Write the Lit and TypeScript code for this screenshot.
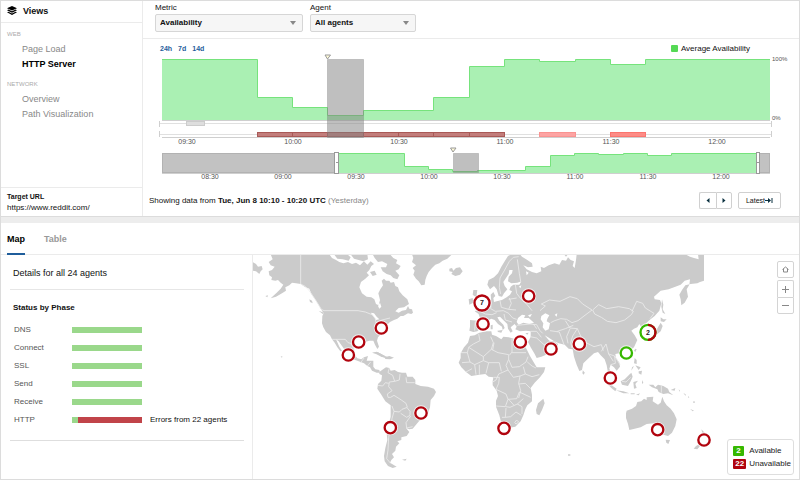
import { LitElement, html, svg, css } from "lit";
import { customElement, state } from "lit/decorators.js";
import { classMap } from "lit/directives/class-map.js";
import { styleMap } from "lit/directives/style-map.js";

/* Availability steps: [end, percent], minutes counted from 09:30. */
const STEPS: [number, number][] = [
  [20, 100], [30, 37], [40, 21], [50, 8], [70, 16], [80, 37], [90, 88],
  [100, 100], [110, 96], [120, 100], [130, 92], [165, 100],
];
const CHART_W = 613;
const LEFT = 3;
const RIGHT = 611;
const mainX = (t: number) => Math.min(RIGHT, Math.round(28 + 3.533 * t));
const miniX = (t: number) => Math.min(RIGHT, Math.round(197 + 2.433 * t));

function stepPath(x: (t: number) => number, start: number, base: number, height: number) {
  let px = start;
  let d = "";
  for (const [end, pct] of STEPS) {
    const y = base - Math.round((pct * height) / 100) + 0.5;
    d += `${d ? "L" : "M"}${px} ${y}`;
    px = x(end) - (end === 165 ? 0 : 0.5);
    d += `L${px} ${y}`;
  }
  return { line: d, area: `${d}L${px} ${base}L${start} ${base}Z` };
}

const clock = (t: number) => {
  const m = 570 + t;
  return `${String(Math.floor(m / 60)).padStart(2, "0")}:${String(m % 60).padStart(2, "0")}`;
};

@customElement("availability-timeline")
export class AvailabilityTimeline extends LitElement {
  static styles = css`
    :host { display: block; }
    .chart { display: grid; grid-template-columns: 1fr 27px; }
    .scale { display: flex; flex-direction: column; justify-content: space-between; padding: 1px 0 15px; font-size: 6px; line-height: 9px; color: #555; }
    svg { display: block; width: 100%; overflow: visible; }
    .main { height: 84px; }
    .mini { height: 27px; }
    .times { position: relative; height: 8px; font-size: 7px; line-height: 8px; color: #555; grid-column: 1; }
    .times span { position: absolute; transform: translateX(-50%); }
    .area { fill: #aaf0b3; }
    .line { fill: none; stroke: #76e37c; vector-effect: non-scaling-stroke; }
    .axis { fill: #cfcfcf; }
    .track { fill: #e0e0e0; }
    .quiet { fill: #dedede; stroke: #cccccc; }
    .outage { fill: #c27d7b; stroke: #a95957; }
    .warn { fill: #fda4a3; stroke: #f99391; }
    .alert { fill: #fd8c86; stroke: #fa756f; }
    .shade { fill: #808080; fill-opacity: 0.5; stroke: #808080; stroke-opacity: 0.35; }
    .outside { fill: #c2c2c2; stroke: #b2b2b2; }
    .handle { fill: #fff; stroke: #999; }
    .pin { fill: #fffbd8; stroke: #999; }
  `;

  private labels(x: (t: number) => number, from: number) {
    const out = [];
    for (let t = from; t <= 150; t += 30) {
      out.push(html`<span style=${styleMap({ left: `${(x(t) / CHART_W) * 100}%` })}>${clock(t)}</span>`);
    }
    return html`<div class="times">${out}</div>`;
  }

  render() {
    const main = stepPath(mainX, LEFT, 66, 61);
    const mini = stepPath(miniX, 178, 27, 20);
    const outages = [[20, 30], [30, 40], [40, 50], [50, 60], [60, 70], [70, 80], [80, 90]];
    const box = (cls: string, a: number, b: number, y: number, h: number) =>
      svg`<rect class=${cls} x=${a + 0.5} y=${y + 0.5} width=${b - a} height=${h - 1} />`;
    return html`
      <div class="chart">
        <svg class="main" viewBox="0 0 613 84" preserveAspectRatio="none" role="img" aria-label="Average availability">
          <path class="area" d=${main.area} /><path class="line" d=${main.line} />
          <rect class="axis" x="3" y="66" width="608" height="1" />
          <rect class="track" x="0" y="69" width="613" height="1" />
          <rect class="axis" x="0" y="67" width="1" height="6" /><rect class="axis" x="612" y="67" width="1" height="6" />
          <rect class="track" x="0" y="80" width="613" height="1" />
          <rect class="axis" x="0" y="77" width="1" height="6" /><rect class="axis" x="612" y="77" width="1" height="6" />
          ${box("quiet", 27, 45, 67, 5)}
          ${outages.map(([a, b]) => box("outage", mainX(a) - 1, mainX(b) - 1, 78, 5))}
          ${box("warn", mainX(100) - 1, mainX(110) - 1, 78, 5)}
          ${box("alert", mainX(120) - 1, mainX(130) - 1, 78, 5)}
          <rect class="axis" x="3" y="83" width="608" height="1" />
          ${box("shade", mainX(40) - 1, mainX(50) - 1, 5, 79)}
          <path class="pin" d="M166 1H171.500L168.500 5Z" />
        </svg>
        <div class="scale"><span>100%</span><span>0%</span></div>
        ${this.labels(mainX, 0)}
      </div>
      <div class="chart">
        <svg class="mini" viewBox="0 0 613 27" preserveAspectRatio="none" role="img" aria-label="Visible time range">
          <path class="area" d=${mini.area} /><path class="line" d=${mini.line} />
          <rect class="axis" x="3" y="27" width="608" height="1" />
          ${box("outside", 3, 177, 7, 20)}
          ${box("outside", 600, 610, 7, 20)}
          ${box("shade", miniX(40), miniX(50), 7, 20)}
          <rect class="handle" x="175.500" y="6.500" width="4" height="21" />
          <rect class="handle" x="597.500" y="6.500" width="3" height="21" />
          <path class="handle" d="M177 16.500H179M598 16.500H600" />
          <path class="pin" d="M291.500 2H297L294 6Z" />
        </svg>
        ${this.labels(miniX, -60)}
      </div>
    `;
  }
}

type Marker = { x: number; y: number; kind: "down" | "up" | "mixed"; count?: number };

const MARKERS: Marker[] = [
  { x: 1144, y: 984, kind: "down" }, { x: 1076, y: 1026, kind: "down" }, { x: 1045, y: 1065, kind: "down" },
  { x: 1263, y: 1239, kind: "down" }, { x: 1171, y: 1283, kind: "down" },
  { x: 1586, y: 888, kind: "down" }, { x: 1446, y: 909, kind: "down", count: 7 }, { x: 1449, y: 972, kind: "down" },
  { x: 1561, y: 1026, kind: "down" }, { x: 1653, y: 1047, kind: "down" }, { x: 1738, y: 1032, kind: "down" },
  { x: 1944, y: 997, kind: "mixed", count: 2 }, { x: 1879, y: 1059, kind: "up" }, { x: 1831, y: 1134, kind: "down" },
  { x: 1512, y: 1285, kind: "down" }, { x: 1973, y: 1289, kind: "down" }, { x: 2112, y: 1320, kind: "down" },
];

@customElement("agent-map")
export class AgentMap extends LitElement {
  static styles = css`
    :host { display: block; position: relative; }
    .world { display: block; width: 100%; }
    .land { fill: #cbcbcb; }
    .sea { fill: #fff; }
    .borders { fill: none; stroke: #ececec; stroke-width: 2.5; stroke-linejoin: round; }
    .halo { fill: #fff; fill-opacity: 0.7; }
    .ring { fill: #fff; stroke-width: 7; }
    .down { stroke: #b1040e; }
    .up, .mixed { stroke: #36b800; }
    .half { fill: none; stroke: #b1040e; stroke-width: 7; }
    .count { font: bold 21px "Liberation Sans", Arial, sans-serif; text-anchor: middle; fill: #222; }
    .controls { position: absolute; top: 6px; right: 5px; display: flex; flex-direction: column; }
    .controls button { width: 17px; height: 17px; padding: 0; display: grid; place-items: center; background: #fff; border: 1px solid #d4d4d4; border-radius: 2px; }
    .controls .home { margin-bottom: 2px; }
    .controls .in { border-bottom: 0; border-radius: 2px 2px 0 0; }
    .controls .out { border-radius: 0 0 2px 2px; }
    .controls svg { width: 9px; height: 9px; fill: none; stroke: #888; }
    .legend { position: absolute; right: 5px; bottom: 4px; margin: 0; padding: 4px 2px 4px 5px; list-style: none; background: #fff; border: 1px solid #dedede; border-radius: 3px; font-size: 8px; color: #222; }
    .legend li { display: grid; grid-template-columns: 14px auto; gap: 2px; align-items: center; height: 13px; }
    .legend b { justify-self: start; padding: 0 3px; line-height: 10px; border-radius: 1px; color: #fff; background: #36b800; }
    .legend .bad { padding: 0 2px; background: #b1040e; }
  `;

  private marker(m: Marker) {
    const r = m.count ? 22.5 : 17;
    return svg`<circle class="halo" cx=${m.x} cy=${m.y} r=${r + 6} />
      <circle class="ring ${m.kind}" cx=${m.x} cy=${m.y} r=${r} />
      ${m.kind === "mixed" ? svg`<path class="half" d="M${m.x} ${m.y - r}A${r} ${r} 0 0 1 ${m.x} ${m.y + r}" />` : ""}
      ${m.count ? svg`<text class="count" x=${m.x} y=${m.y + 7}>${m.count}</text>` : ""}`;
  }

  render() {
    return html`
      <svg class="world" viewBox="759 765 1638 672" role="img" aria-label="World map of agents">
        <g transform="translate(750 750)">
          <path class="land" d="M8 36L18 42L24 50L35 48L38 58L32 64L28 72L18 64L8 62ZM62 13L68 28L56 36L62 46L74 50L66 60L56 64L58 76L66 82L64 90L76 92L84 90L92 98L100 104L92 116L80 128L62 145L78 140L96 130L108 122L106 112L118 106L126 98L138 100L152 102L164 110L178 116L184 132L194 146L204 162L212 176L221 190L217 198L216 220L220 232L228 246L240 256L246 268L254 278L262 292L271 304L276 302L268 290L258 268L266 274L276 288L290 308L302 326L318 331L332 336L342 340L352 348L360 352L366 362L380 368L390 368L388 360L376 358L370 350L370 332L350 332L354 318L342 322L334 328L322 325L314 314L312 296L318 284L330 276L345 276L358 272L370 272L375 284L382 297L387 290L381 272L384 262L394 251L405 246L412 236L410 226L420 216L432 210L442 206L452 198L460 198L474 190L484 192L489 188L486 178L478 176L474 168L468 180L456 182L446 188L436 184L446 174L462 172L477 162L472 148L458 136L448 124L444 112L436 108L432 96L422 98L418 92L408 92L402 86L395 92L399 106L391 118L385 130L390 150L386 166L378 162L373 148L364 142L350 140L336 130L328 112L333 96L346 86L357 76L350 68L358 60L364 48L372 42L362 34L352 44L342 34L330 46L318 38L306 42L294 36L280 40L268 36L258 30L246 24L238 13ZM486 13H606L592 26L578 32L568 40L556 44L546 54L536 66L530 78L526 90L524 104L514 106L506 94L498 86L490 74L494 62L488 54L498 46L486 36L490 24ZM368 13H420L430 24L442 30L438 40L452 48L446 58L436 62L448 76L442 88L430 84L422 76L410 72L398 64L392 52L408 52L412 42L396 34L384 36L374 24ZM252 13H292L302 22L296 32L278 28L262 26ZM302 13H352L354 28L340 34L326 30L312 26ZM360 66L374 62L380 74L368 78ZM366 308L380 305L394 312L406 319L394 320L378 312ZM404 322L418 318L432 323L420 328L406 327ZM178 148L186 152L188 160L180 156ZM46 138L54 136L52 142ZM206 182L222 188L218 192ZM92 318L98 320L95 323Z" />
          <path class="sea" d="M384 168L390 158L394 170L388 176ZM362 188L372 190L380 200L388 208L378 210L370 198Z" />
          <path class="borders" d="M152 13V102L164 108L178 122L198 152L214 178L222 182H324L346 186L366 194L376 206L378 218L396 210L420 204M246 268H270L286 268L294 278L302 280L312 298M332 338L342 324M352 348L362 336" />
        </g>
        <g transform="translate(900 1050)">
          <path class="land" d="M238 66L246 60L258 52L268 54L272 62L284 60L294 66L306 68L318 68L322 80L338 80L346 90V102L362 108L384 110L402 116L408 126L402 138L392 150L390 172L384 190L372 206L358 212L348 224L338 236L328 238L318 234L328 246L320 258L304 262L304 270L292 274L298 280L288 290L286 302L276 312L282 322L274 330L270 338L290 350L278 354L264 348L254 334L252 318L256 294L262 270L260 250L264 232L272 200L272 166L256 154L244 134L232 116L234 102L244 92L246 76L238 72ZM306 329L320 326L316 332ZM218 8L234 7L250 16L262 21L278 24L262 26L244 20L232 10Z" />
          <path class="borders" d="M268 54L264 68L278 76L284 94L268 96L266 110L276 122L262 132L264 142L272 142L282 136L304 150L318 160L322 172L306 178L298 186L282 184L276 168M284 94L298 90L300 72M318 82L320 98L344 98M234 106L248 108L256 98M256 98L266 100M322 174L330 184V196L320 202L302 190M332 198L318 218L320 234L338 230M282 184L276 206L272 232L266 262L264 300L260 326L272 340" />
        </g>
        <g transform="translate(1320 750)">
          <path class="land" d="M214 13L204 18L194 34L184 50L174 70L162 82L146 90L142 104L150 118L162 108L170 118L176 138L186 140L192 130L202 118L194 108L190 96L198 84L206 72L208 60L218 60L216 70L206 80L204 94L214 100L232 98L244 94L238 104L220 104L212 110L208 120L216 124L210 134L200 142L186 150L170 154L162 156L160 144L166 138L160 126L152 134L154 154L142 158L130 172L118 178L104 184L116 192L120 204L112 212L90 210L90 230L88 242L100 246L112 244L122 234L134 222L142 212L154 206L164 210L174 222L186 230L188 240L194 234L190 224L178 212L172 202L180 200L192 212L202 222L204 236L212 248L218 244L212 232L224 222L230 230L226 238L240 244L258 242L272 244L272 260L264 276L272 292L284 312L290 324L304 320L324 312L342 304L352 292L354 282L342 274L328 272L314 256L324 262L340 272L356 280L374 284L386 296L398 298L402 320L410 344L418 363L426 360L430 340L444 326L462 310L474 306L482 316L494 328L500 346L504 368L516 382L524 390L516 372L508 356L512 344L522 352L530 362L540 350L538 338L528 324L526 312L546 308L564 306L582 292L592 270L584 256L574 242L582 236L592 232L598 222L604 232L610 246L620 242L612 226L626 212L644 198L658 182L664 160L660 150L644 148L642 140L662 122L686 118L706 110L722 104L734 92L750 88L748 104L740 118L744 140L734 158L724 166L722 148L718 134L726 120L736 106L752 102L772 100L780 96L792 92V13H774L776 28L762 24L750 20L736 13H410L408 30L404 54L398 48L402 34L392 30L384 22L378 32L366 30L358 44L344 40L326 46L312 54L302 50L304 64L290 70L276 66L260 58L250 46L264 52L278 50L276 40L262 30L246 20L240 13ZM100 120L112 120L110 134L118 144L126 160L126 174L106 178L112 162L104 152L106 140L98 134ZM86 148L98 144L100 158L88 164ZM28 56L36 54L40 62L48 54L60 52L68 64L60 74L46 78L34 72L38 66L28 64ZM372 13L384 13L378 20ZM152 226L158 224V238H152ZM172 242L188 240L184 248L174 246ZM256 250L266 248L262 254ZM428 364L434 368L431 374L427 370Z" />
          <path class="sea" d="M230 216L234 204L246 194L256 196L252 204L266 204L282 218L268 222L250 218L236 224ZM264 196L276 192L270 202ZM304 198L316 190L328 196L322 206L320 214L330 220L326 238L316 242L308 232L310 220L302 208ZM344 194L352 190L350 200ZM258 64L266 68L260 76ZM236 110L244 106L242 114Z" />
          <path class="borders" d="M182 132L178 112L180 84L194 60L208 34L220 22L236 20M232 28L238 70L242 94M226 104L230 130L242 146L258 160L276 182M154 154L152 176L166 184L190 182L206 190L218 204L230 208M180 152L184 172L206 178L214 160L208 144M206 148L230 144M206 178L228 180M120 184L136 192L156 194L170 188M106 214L104 242M116 212L132 220M192 192L196 210L216 216M230 226L270 222L290 224L300 242L308 250M272 244L290 244L304 262M270 260L290 264L312 284L336 290M300 182L316 168L304 162L328 150L360 154L390 140L412 146L428 162L456 180L432 198L414 212L396 218L380 208L362 206L344 212L332 218M458 180L476 164L500 176L536 170L568 176L580 184L574 194L554 210L528 218L502 214L484 202L464 192ZM576 184L590 154L608 160L616 174L642 190L630 206M330 242L358 246L364 262L372 284M352 244L376 236L400 226M376 212L390 234L412 236L422 258L438 278L462 290L484 284L490 302M390 236L380 260L384 280M412 236L398 258L392 278L396 294M280 222L290 236M484 304L498 282L506 312L520 334M506 312L524 318L526 340L512 344M524 318L540 344" />
        </g>
        <g transform="translate(1320 990)">
          <path class="land" d="M90 18L104 16L118 8L140 4L154 4L156 14L168 18L184 28L190 20L206 22L222 26L240 30L256 30L252 42L260 58L270 78L282 98L290 112L316 112L312 126L300 142L284 158L272 174L276 194L276 214L262 226L256 238L250 256L242 274L226 290L206 294L190 296L184 280L178 256L168 230L168 212L174 198L170 182L158 166L158 154L160 142L146 140L136 132L118 134L94 138L78 126L64 112L56 98L62 84L62 70L72 52L84 38ZM310 206L314 220L306 240L298 256L290 252L288 240L294 220ZM384 373H391V377H384Z" />
          <path class="borders" d="M116 12L120 32L100 42L86 52L130 80L154 58L160 38L152 20M62 68H82L86 52M82 68L90 96L66 98M90 96L104 104L130 92L130 80M154 58L174 68L206 74V88L198 106L204 120L176 132L168 150L158 156M162 38L158 60M216 26V66L208 76M216 68H258M130 92L146 98L178 98L184 124M146 98L138 130M104 104L108 134M118 104V134M78 126L96 116M206 88L216 112L238 110L258 96L264 80M262 96L276 108L288 114M250 110L256 132L276 140L298 134M256 132L240 138L220 142L204 120M240 138L236 160L242 182L236 204M236 162L256 160L272 176M160 142H178L176 160L168 178L198 192L204 208L230 206L238 186L272 202M168 228L196 230L204 208M198 230L210 232L232 222L250 206M232 222L246 230V252M198 234L196 262H186M196 262L212 260L228 246L244 256M206 208L222 226M224 278L230 270L236 276L228 282Z" />
        </g>
        <g transform="translate(1680 750)">
          <path class="land" d="M306 148L310 164L308 178L316 192L308 188L304 170ZM302 202L310 208L320 208L312 216L302 214ZM302 218L308 228L302 244L292 252L276 258L270 254L286 246L294 232ZM262 256L270 260L266 268ZM226 296L230 298L226 306L222 302ZM224 324L230 330L230 342L222 340ZM226 346L242 352L236 360ZM236 364L246 362L244 374L236 370ZM216 352L222 348L214 362ZM68 360L74 368L70 372Z" />
        </g>
        <g transform="translate(1800 1020)">
          <path class="land" d="M62 124L74 118L86 106L94 98L98 110L92 124L84 138L66 134ZM8 108L20 118L38 138L50 146L46 154L34 144L20 130ZM48 151L70 154L88 160L70 160ZM100 126L114 122L106 132L110 144L102 146ZM92 160H104V163H92ZM108 164L120 160L116 166ZM126 120L130 128L126 132ZM146 134L160 134L166 142L174 134L190 138L204 146L208 156L220 166L204 160L190 162L176 156L172 148L156 142ZM212 150L226 144L224 152ZM236 148L240 152L238 155ZM250 158L258 164L256 167ZM264 168L268 172L265 174ZM270 206L282 212L278 214ZM280 184H284V189H280ZM80 212L96 206L108 198L112 186L124 184L132 176L140 180L140 172L160 170L158 184L174 194L182 188L187 170L192 184L200 196L212 206L222 220L230 238L226 258L216 278L204 288L190 284L180 278L172 262L160 250L140 252L122 262L104 266L88 270L84 252L78 234L78 220ZM197 299L210 300L205 312L199 308ZM304 268L312 276L328 290L316 304L310 290ZM298 312L288 318L281 326L292 328L300 318Z" />
          <path class="borders" d="M184 138V158M66 124L78 126L92 112" />
        </g>
        ${MARKERS.map((m) => this.marker(m))}
      </svg>
      <div class="controls">
        <button class="home" aria-label="Reset map"><svg viewBox="0 0 9 9"><path d="M1.500 4.500L4.500 2L7.500 4.500M2.500 4V7H6.500V4" /></svg></button>
        <button class="in" aria-label="Zoom in"><svg viewBox="0 0 9 9"><path d="M1 4.500H8M4.500 1V8" /></svg></button>
        <button class="out" aria-label="Zoom out"><svg viewBox="0 0 9 9"><path d="M1 4.500H8" /></svg></button>
      </div>
      <ul class="legend">
        <li><b>2</b><span>Available</span></li>
        <li><b class="bad">22</b><span>Unavailable</span></li>
      </ul>
    `;
  }
}

const PHASES = [
  { name: "DNS", ok: 100, note: "" },
  { name: "Connect", ok: 100, note: "" },
  { name: "SSL", ok: 100, note: "" },
  { name: "Send", ok: 100, note: "" },
  { name: "Receive", ok: 100, note: "" },
  { name: "HTTP", ok: 8, note: "Errors from 22 agents" },
];

const NAV = [
  { title: "WEB", items: ["Page Load", "HTTP Server"] },
  { title: "NETWORK", items: ["Overview", "Path Visualization"] },
];

@customElement("app-root")
export class AppRoot extends LitElement {
  @state() private view = "HTTP Server";
  @state() private tab = "Map";

  static styles = css`
    :host { display: flex; flex-direction: column; box-sizing: border-box; min-height: 100vh; border: 1px solid #dcdcdc; background: #fff; color: #111; font-family: "Liberation Sans", Arial, sans-serif; font-size: 8px; }
    * { box-sizing: border-box; }
    button, select { font: inherit; color: inherit; }
    h1, h2, h3, p { margin: 0; }
    .top { display: grid; grid-template-columns: 142px 1fr; border-bottom: 1px solid #dcdcdc; }
    .side { display: flex; flex-direction: column; border-right: 1px solid #ebebeb; }
    .views { display: flex; align-items: center; gap: 6px; height: 22px; padding: 0 6px 2px; border-bottom: 1px solid #ebebeb; font-size: 9px; }
    .views svg { width: 10px; height: 10px; }
    nav { flex: 1; display: flex; flex-direction: column; gap: 7px; padding: 6px; }
    .group { display: flex; flex-direction: column; }
    .group h2 { margin-bottom: 3px; font-size: 6px; line-height: 10px; font-weight: normal; color: #aaa; }
    .group a { padding-left: 15px; font-size: 9px; line-height: 15px; color: #888; text-decoration: none; }
    .group a.current { color: #000; font-weight: bold; }
    .target { padding: 3px 6px; border-top: 1px solid #ebebeb; line-height: 11px; height: 29px; }
    .target h2 { font-size: 7px; line-height: 11px; }
    .filters { display: flex; gap: 7px; padding: 1px 12px 6px; border-bottom: 1px solid #ebebeb; }
    .filters label { display: flex; flex-direction: column; line-height: 12px; }
    .pick { width: 148px; height: 18px; padding: 0 4px; appearance: none; border: 1px solid #d6d6d6; border-radius: 2px; font-weight: bold;
      background: #f6f6f6 url("data:image/svg+xml,%3Csvg xmlns='http://www.w3.org/2000/svg' viewBox='0 0 6 4'%3E%3Cpath d='M0 0H6L3 4Z' fill='%23888'/%3E%3C/svg%3E") right 6px center / 6px 4px no-repeat; }
    .pick.narrow { width: 106px; }
    .ranges { display: flex; align-items: center; gap: 6px; padding: 4px 49px 0 17px; line-height: 11px; }
    .ranges a { font-size: 7px; font-weight: bold; color: #1f5d9b; text-decoration: none; }
    .key { display: flex; align-items: center; gap: 3px; margin-left: auto; }
    .key i { width: 7px; height: 7px; border-radius: 1px; background: #55d955; }
    availability-timeline { margin-left: 16px; }
    .foot { display: flex; align-items: center; margin-top: 11px; padding: 0 18px 7px 6px; }
    .foot p { flex: 1; }
    .foot em { font-style: normal; color: #888; }
    .foot button { display: flex; align-items: center; justify-content: center; width: 16px; height: 17px; padding: 0; border: 1px solid #d0d0d0; border-radius: 2px; background: #fff; font-size: 7px; }
    .foot .prev { width: 17px; border-right: 0; border-radius: 2px 0 0 2px; }
    .foot .next { border-radius: 0 2px 2px 0; }
    .foot .latest { width: 43px; margin-left: 6px; }
    .foot svg { width: 8px; height: 7px; fill: #0b3140; stroke: none; }
    .band { height: 6px; background: #ededed; }
    .tabs { display: flex; gap: 19px; height: 32px; padding: 0 6px; border-bottom: 1px solid #ebebeb; }
    .tabs button { height: 32px; padding: 2px 0 0; border: 0; border-bottom: 2px solid transparent; background: none; font-size: 9px; font-weight: bold; color: #999; }
    .tabs button.on { color: #000; border-color: #1f5d9b; }
    .detail { flex: 1; display: grid; grid-template-columns: 252px 1fr; }
    .panel { padding: 8px 8px 0 9px; border-right: 1px solid #ebebeb; }
    .panel h2 { padding: 0 3px 5px; border-bottom: 1px solid #e6e6e6; font-size: 9px; line-height: 21px; font-weight: normal; }
    .panel h3 { padding: 9px 3px 4px; font-size: 8px; line-height: 17px; }
    table { width: 100%; border-collapse: collapse; table-layout: fixed; }
    .phases { padding-bottom: 12px; border-bottom: 1px solid #dedede; }
    tr { height: 18px; }
    th, td { padding: 0; text-align: left; }
    th { width: 62px; padding-left: 4px; font-weight: normal; color: #555; }
    .cell { width: 70px; }
    .note { padding-left: 8px; }
    .bar { height: 6px; margin-top: 1px; background: #c14449; }
    .good { height: 6px; background: #9ad88b; }
  `;

  render() {
    return html`
      <section class="top">
        <aside class="side">
          <h1 class="views">
            <svg viewBox="0 0 10 10" aria-hidden="true">
              <path d="M5 0L10 2.300L5 4.600L0 2.300Z" />
              <path d="M0 4.200L1.500 3.600L5 5.300L8.500 3.600L10 4.200L5 6.700Z" />
              <path d="M0 6.300L1.500 5.700L5 7.500L8.500 5.700L10 6.300L5 9Z" />
            </svg>Views
          </h1>
          <nav>
            ${NAV.map((g) => html`<div class="group">
              <h2>${g.title}</h2>
              ${g.items.map((item) => html`<a href="#" class=${classMap({ current: item === this.view })} @click=${() => (this.view = item)}>${item}</a>`)}
            </div>`)}
          </nav>
          <div class="target"><h2>Target URL</h2><p>https://www.reddit.com/</p></div>
        </aside>
        <div>
          <div class="filters">
            <label>Metric<select class="pick"><option>Availability</option></select></label>
            <label>Agent<select class="pick narrow"><option>All agents</option></select></label>
          </div>
          <div class="ranges">
            <a href="#">24h</a><a href="#">7d</a><a href="#">14d</a>
            <span class="key"><i></i>Average Availability</span>
          </div>
          <availability-timeline></availability-timeline>
          <div class="foot">
            <p>Showing data from <b>Tue, Jun 8 10:10 - 10:20 UTC</b> <em>(Yesterday)</em></p>
            <button class="prev" aria-label="Earlier"><svg viewBox="0 0 8 7"><path d="M5.500 1V6L2.500 3.500Z" /></svg></button>
            <button class="next" aria-label="Later"><svg viewBox="0 0 8 7"><path d="M2.500 1V6L5.500 3.500Z" /></svg></button>
            <button class="latest">Latest<svg viewBox="0 0 8 7"><path d="M0 3H3V1L6 3.500L3 6V4H0ZM6.500 1H7.500V6H6.500Z" /></svg></button>
          </div>
        </div>
      </section>
      <div class="band"></div>
      <div class="tabs" role="tablist">
        ${["Map", "Table"].map((t) => html`<button role="tab" aria-selected=${t === this.tab} class=${classMap({ on: t === this.tab })} @click=${() => (this.tab = t)}>${t}</button>`)}
      </div>
      <section class="detail">
        <div class="panel">
          <h2>Details for all 24 agents</h2>
          <h3 id="phase">Status by Phase</h3>
          <div class="phases">
            <table aria-labelledby="phase">
              ${PHASES.map((p) => html`<tr>
                <th scope="row">${p.name}</th>
                <td class="cell"><div class="bar"><div class="good" style=${styleMap({ width: `${p.ok}%` })}></div></div></td>
                <td class="note">${p.note}</td>
              </tr>`)}
            </table>
          </div>
        </div>
        <agent-map></agent-map>
      </section>
    `;
  }
}
